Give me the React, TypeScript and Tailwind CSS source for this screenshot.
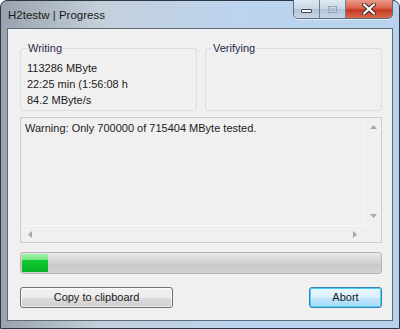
import React from "react";

const font = { fontFamily: '"Liberation Sans", Arial, sans-serif' };

function Tri({ dir }: { dir: "up" | "down" | "left" | "right" }) {
  const pts: Record<string, string> = {
    up: "0,4 3.5,0 7,4",
    down: "0,0 7,0 3.5,4",
    left: "4,0 4,7 0,3.5",
    right: "0,0 0,7 4,3.5",
  };
  const vertical = dir === "up" || dir === "down";
  return (
    <svg width={vertical ? 7 : 4} height={vertical ? 4 : 7} viewBox={vertical ? "0 0 7 4" : "0 0 4 7"}>
      <polygon points={pts[dir]} fill="#a8a8a8" />
    </svg>
  );
}

function Group({ title, lines }: { title: string; lines: string[] }) {
  return (
    <fieldset className="h-[70px] border border-[#d5dfe5] rounded-[3px] pl-[6px] pr-[6px] pt-[5px] m-0 min-w-0">
      <legend className="px-[1px] text-[11px] leading-[14px] text-[#1e2a4a]">{title}</legend>
      {lines.map((l) => (
        <div key={l} className="text-[11px] leading-[16px] text-[#1b1b1b] whitespace-nowrap">
          {l}
        </div>
      ))}
    </fieldset>
  );
}

export default function App() {
  return (
    <div style={font} className="w-[400px] h-[329px] overflow-hidden bg-white">
      <div className="w-[400px] h-[329px] flex flex-col border border-[#2d3643] rounded-t-[7px] bg-[linear-gradient(90deg,#9aa3ad_0%,#c4cfdb_25%,#bcd4ee_60%,#b8d2ee_100%)]">
        {/* Title bar */}
        <div className="h-[27px] flex items-start justify-between">
          <div className="pl-[7px] pt-[6px] text-[11.5px] leading-[16px] text-[#1a1a1a]">H2testw | Progress</div>
          <div className="mr-[6px] flex h-[19px] mt-[-1px] border border-[#5b6a7c] border-t-0 rounded-b-[5px] overflow-hidden shadow-[0_1px_0_rgba(255,255,255,0.6)]">
            <div className="w-[26px] h-full flex items-center justify-center bg-[linear-gradient(180deg,#dfe8f2_0%,#c9d6e4_50%,#b3c3d6_51%,#c7d6e7_100%)] border-r border-[#6f7f92]">
              <div className="w-[11px] h-[4px] mt-[4px] bg-white border border-[#3b4656] rounded-[1px]" />
            </div>
            <div className="w-[26px] h-full flex items-center justify-center bg-[linear-gradient(180deg,#dfe8f2_0%,#c9d6e4_50%,#b3c3d6_51%,#c7d6e7_100%)] border-r border-[#6f7f92]">
              <div className="w-[9px] h-[7px] border border-[#95a6ba] flex items-center justify-center">
                <div className="w-[5px] h-[3px] border border-[#aebccc]" />
              </div>
            </div>
            <div className="w-[46px] h-full flex items-center justify-center bg-[linear-gradient(180deg,#ea9a8a_0%,#d9634d_45%,#c7381f_55%,#d66a50_100%)]">
              <svg width="14" height="12" viewBox="0 0 14 12">
                <path d="M2 1.5 L12 10.5 M12 1.5 L2 10.5" stroke="#3a2a2a" strokeWidth="4" strokeLinecap="round" />
                <path d="M2 1.5 L12 10.5 M12 1.5 L2 10.5" stroke="#ffffff" strokeWidth="2.2" strokeLinecap="round" />
              </svg>
            </div>
          </div>
        </div>

        {/* Client area */}
        <div className="flex-1 ml-[6px] mr-[6px] mb-[7px] border border-[#5d6b7b] bg-[#f0f0f0] pl-[12px] pr-[10px] pt-[12px] pb-[12px] flex flex-col">
          <div className="grid grid-cols-2 gap-[8px]">
            <Group title="Writing" lines={["113286 MByte", "22:25 min (1:56:08 h", "84.2 MByte/s"]} />
            <Group title="Verifying" lines={[]} />
          </div>

          {/* Log box */}
          <div className="mt-[6px] h-[126px] border border-[#c9cdd2] bg-[#f0f0f0] grid grid-cols-[1fr_17px] grid-rows-[1fr_17px]">
            <div className="pl-[4px] pt-[2px] text-[11px] leading-[16px] text-[#1b1b1b] whitespace-nowrap overflow-hidden">
              Warning: Only 700000 of 715404 MByte tested.
            </div>
            <div className="border-l border-[#fafafa] bg-[#f0f0f0] flex flex-col items-center justify-between pt-[7px] pb-[7px]">
              <Tri dir="up" />
              <Tri dir="down" />
            </div>
            <div className="border-t border-[#fafafa] bg-[#f0f0f0] flex items-center justify-between pl-[7px] pr-[7px]">
              <Tri dir="left" />
              <Tri dir="right" />
            </div>
            <div className="bg-[#f0f0f0]" />
          </div>

          {/* Progress bar */}
          <div className="mt-[9px] h-[22px] border border-[#b2b2b2] rounded-[3px] bg-[linear-gradient(180deg,#e9e9e9_0%,#d6d6d6_40%,#c9c9c9_60%,#d3d3d3_100%)] p-[1px] flex">
            <div className="w-[26px] h-full bg-[linear-gradient(180deg,#9ef0a8_0%,#7ee98c_30%,#10cc30_36%,#06b025_100%)] rounded-[1px]" />
          </div>

          {/* Buttons */}
          <div className="mt-[13px] flex justify-between">
            <div className="w-[153px] h-[21px] border border-[#707070] rounded-[3px] bg-[linear-gradient(180deg,#f2f2f2_0%,#ebebeb_50%,#dddddd_51%,#cfcfcf_100%)] shadow-[inset_0_0_0_1px_rgba(255,255,255,0.7)] flex items-center justify-center text-[11px] text-[#1b1b1b]">
              Copy to clipboard
            </div>
            <div className="w-[73px] h-[21px] border border-[#3c7fb1] rounded-[3px] bg-[linear-gradient(180deg,#eaf6fd_0%,#d9f0fc_50%,#bee6fd_51%,#a7d9f5_100%)] shadow-[inset_0_0_0_1px_#48d0f8] flex items-center justify-center text-[11px] text-[#1b1b1b]">
              Abort
            </div>
          </div>
        </div>
      </div>
    </div>
  );
}
